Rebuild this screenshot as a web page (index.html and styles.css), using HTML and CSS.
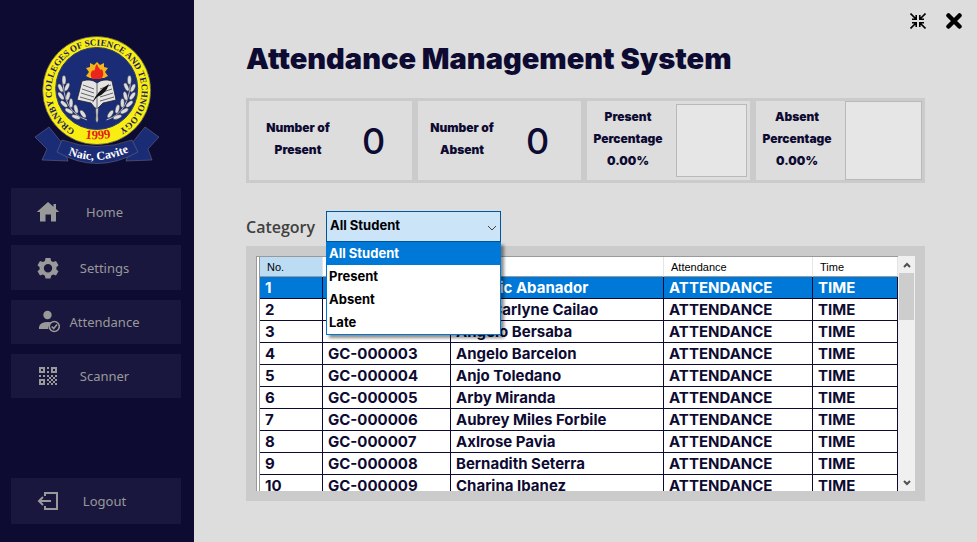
FILE: index.html
```html
<!DOCTYPE html>
<html lang="en">
<head>
<meta charset="utf-8">
<title>Attendance Management System</title>
<link rel="stylesheet" href="styles.css">
</head>
<body>
<div class="app">
  <aside class="sidebar">
    <svg class="logo" viewBox="0 0 145 140" role="img" aria-label="Granby Colleges of Science and Technology">
      <defs>
        <path id="ring" d="M50 100 A45 45 0 1 1 90 101.500"/>
        <path id="year" d="M50 106 Q72 113 96 105"/>
        <path id="ribbon" d="M37 122 Q72 139 110 119"/>
        <g id="wreath" fill="#ddd" stroke="#222" stroke-width=".4">
          <path d="M62 90 Q37 82 38 46" fill="none" stroke="#bbb" stroke-width="1"/>
          <ellipse cx="39" cy="50" rx="2" ry="4.5"/>
          <ellipse cx="35.500" cy="58" rx="2" ry="4.500" transform="rotate(-25 35.500 58)"/>
          <ellipse cx="42" cy="57" rx="2" ry="4.500" transform="rotate(25 42 57)"/>
          <ellipse cx="36" cy="66" rx="2" ry="4.500" transform="rotate(-35 36 66)"/>
          <ellipse cx="43" cy="66" rx="2" ry="4.500" transform="rotate(15 43 66)"/>
          <ellipse cx="39" cy="74" rx="2" ry="4.500" transform="rotate(-48 39 74)"/>
          <ellipse cx="46" cy="73" rx="2" ry="4.500" transform="rotate(0 46 73)"/>
          <ellipse cx="44" cy="81" rx="2" ry="4.500" transform="rotate(-60 44 81)"/>
          <ellipse cx="51" cy="79" rx="2" ry="4.500" transform="rotate(-15 51 79)"/>
          <ellipse cx="51" cy="87" rx="2" ry="4.500" transform="rotate(-72 51 87)"/>
          <ellipse cx="58" cy="84" rx="2" ry="4.500" transform="rotate(-35 58 84)"/>
        </g>
      </defs>
      <path d="M10 107 L24 97 L37 113 L43 131 L17 130 L22 119 Z M134 107 L120 97 L107 113 L101 131 L127 130 L123 119 Z" fill="#1b2c77" stroke="#667" stroke-width=".6"/>
      <circle cx="71.700" cy="60.500" r="54" fill="#f8ee12" stroke="#555" stroke-width=".7"/>
      <circle cx="71.700" cy="58.500" r="41" fill="#1b2c77" stroke="#34406b"/>
      <text class="logo-ring"><textPath href="#ring">GRANBY COLLEGES OF SCIENCE AND TECHNOLOGY</textPath></text>
      <path d="M37 110 Q72 123 107 110 L113 122 Q72 145 32 122 Z" fill="#1b2c77" stroke="#667" stroke-width=".6"/>
      <text class="logo-year"><textPath href="#year" startOffset="50%">1999</textPath></text>
      <text class="logo-place"><textPath href="#ribbon" startOffset="50%">Naic, Cavite</textPath></text>
      <use href="#wreath"/>
      <use href="#wreath" transform="translate(143.400 0) scale(-1 1)"/>
      <path d="M72 32 L75 35 L79 33 L79 37 L83 38 L80 42 L83 46 L79 48 L65 48 L61 46 L64 42 L61 38 L65 37 L65 33 L69 35 Z" fill="#f7b51c"/>
      <path d="M67 49 Q64 43 68 40 Q69 42 70 39 Q70 36 72 34 Q73 38 75 39 Q76 41 77 39 Q80 45 76 49 Z" fill="#e9251c"/>
      <path d="M70 70 H74 L73 86 Q74 91 72 93 Q70 91 71 86 Z" fill="#ccc" stroke="#222" stroke-width=".5"/>
      <path d="M57 51 Q66 48 72 53 Q78 48 87 51 L91 70 L78 73 L73 78 L70 78 L66 73 L52 70 Z" fill="#e4e4e4" stroke="#222" stroke-width=".8"/>
      <path d="M58 55 L69 59 M57 59 L69 63 M56 63 L69 67 M55 67 L69 71 M86 55 L75 59 M87 59 L75 63 M88 63 L75 67 M89 67 L75 71 M72 53 V77" fill="none" stroke="#444" stroke-width=".8"/>
      <path d="M67 73 Q72 61 84 54 Q81 64 72 67 Z" fill="#111"/>
    </svg>
    <nav class="menu">
      <button class="menu-item" type="button">
        <svg class="icon" viewBox="0 0 24 24"><path d="M12 2 0.800 12H4V21.500H9.500V14.500H15V21.500H20V12H23.200L20 9V4H17.500V6.800Z"/></svg>
        <span class="menu-label">Home</span>
      </button>
      <button class="menu-item" type="button">
        <svg class="icon" viewBox="0 0 24 24"><path fill-rule="evenodd" d="M9.500 2H14.500L15.100 5 17.200 6.100 20 5.100 22.500 9.300 20.400 11.300V13.500L22.500 15.300 20 19.500 17.200 18.500 15.100 19.700 14.500 22.500H9.500L8.900 19.700 6.800 18.500 4 19.500 1.500 15.300 3.600 13.500V11.300L1.500 9.300 4 5.100 6.800 6.100 8.900 5ZM12 8A4.200 4.200 0 1 0 12 16.400 4.200 4.200 0 0 0 12 8Z"/></svg>
        <span class="menu-label">Settings</span>
      </button>
      <button class="menu-item" type="button">
        <svg class="icon" viewBox="0 0 24 24"><circle cx="11.500" cy="5" r="4.200"/><path d="M3 19V17Q4 12 12 12Q15 12 16.500 12.500Q12 14 12.300 19Z"/><circle cx="18.300" cy="16.500" r="5" fill="none" stroke="#999" stroke-width="1.600"/><path d="M15.700 16.500 17.700 18.500 21 14.500" fill="none" stroke="#999" stroke-width="1.600"/></svg>
        <span class="menu-label">Attendance</span>
      </button>
      <button class="menu-item" type="button">
        <svg class="icon" viewBox="0 0 24 24"><path fill-rule="evenodd" d="M3 3H9V9H3ZM5 5V7H7V5ZM15 3H21V9H15ZM17 5V7H19V5ZM3 15H9V21H3ZM5 17V19H7V17Z"/><path d="M11 3h2v2h-2zM11 7h2v2h-2zM3 11h2v2H3zM7 11h2v2H7zM11 11h2v2h-2zM15 11h2v2h-2zM19 11h2v2h-2zM13 13h2v2h-2zM17 13h2v2h-2zM11 15h2v2h-2zM15 15h2v2h-2zM19 15h2v2h-2zM13 17h2v2h-2zM17 17h2v2h-2zM11 19h2v2h-2zM15 19h2v2h-2zM19 19h2v2h-2z"/></svg>
        <span class="menu-label">Scanner</span>
      </button>
    </nav>
    <button class="menu-item logout" type="button">
      <svg class="icon" viewBox="0 0 24 24"><path d="M9 7V4H21V20H9V17M15 12H4M7 8 3 12 7 16" fill="none" stroke="#999" stroke-width="2"/></svg>
      <span class="menu-label">Logout</span>
    </button>
  </aside>

  <main class="main">
    <div class="window-controls">
      <button class="window-button" type="button" aria-label="Restore">
        <svg viewBox="0 0 16 16"><path d="M.500.500 5.500 5.500M15.500.500 10.500 5.500M.500 15.500 5.500 10.500M15.500 15.500 10.500 10.500M6.200 2V6.200H2M9.800 2V6.200H14M6.200 14V9.800H2M9.800 14V9.800H14" fill="none" stroke="#000" stroke-width="1.600"/></svg>
      </button>
      <button class="window-button" type="button" aria-label="Close">
        <svg viewBox="0 0 16 16"><path d="M2.500 2.500 13.500 13.500M13.500 2.500 2.500 13.500" fill="none" stroke="#000" stroke-width="4.500" stroke-linecap="round"/></svg>
      </button>
    </div>
    <h1 class="title">Attendance Management System</h1>

    <section class="stats">
      <div class="stat">
        <p class="stat-label">Number of<br>Present</p>
        <p class="stat-value">0</p>
      </div>
      <div class="stat">
        <p class="stat-label">Number of<br>Absent</p>
        <p class="stat-value">0</p>
      </div>
      <div class="stat stat-percent">
        <p class="stat-label">Present<br>Percentage<br>0.00%</p>
        <div class="gauge gauge-inset"></div>
      </div>
      <div class="stat stat-percent">
        <p class="stat-label">Absent<br>Percentage<br>0.00%</p>
        <div class="gauge"></div>
      </div>
    </section>

    <div class="filter">
      <label class="filter-label" for="category">Category</label>
      <div class="combo">
        <select class="combo-box" id="category">
          <option>All Student</option>
          <option>Present</option>
          <option>Absent</option>
          <option>Late</option>
        </select>
        <svg class="combo-arrow" viewBox="0 0 10 6"><path d="M1 1 5 5 9 1" fill="none" stroke="#444"/></svg>
        <ul class="combo-list" role="listbox" aria-label="Category">
          <li class="combo-option selected" role="option" aria-selected="true">All Student</li>
          <li class="combo-option" role="option">Present</li>
          <li class="combo-option" role="option">Absent</li>
          <li class="combo-option" role="option">Late</li>
        </ul>
      </div>
    </div>

    <section class="panel">
      <div class="grid-view">
        <table class="records">
          <colgroup><col class="col-no"><col class="col-id"><col><col class="col-attendance"><col class="col-time"></colgroup>
          <thead>
            <tr><th class="sorted">No.</th><th></th><th></th><th>Attendance</th><th>Time</th></tr>
          </thead>
          <tbody>
            <tr class="current"><td>1</td><td></td><td>Roderic Abanador</td><td>ATTENDANCE</td><td>TIME</td></tr>
            <tr><td>2</td><td></td><td>Mae Carlyne Cailao</td><td>ATTENDANCE</td><td>TIME</td></tr>
            <tr><td>3</td><td></td><td>Angelo Bersaba</td><td>ATTENDANCE</td><td>TIME</td></tr>
            <tr><td>4</td><td>GC-000003</td><td>Angelo Barcelon</td><td>ATTENDANCE</td><td>TIME</td></tr>
            <tr><td>5</td><td>GC-000004</td><td>Anjo Toledano</td><td>ATTENDANCE</td><td>TIME</td></tr>
            <tr><td>6</td><td>GC-000005</td><td>Arby Miranda</td><td>ATTENDANCE</td><td>TIME</td></tr>
            <tr><td>7</td><td>GC-000006</td><td>Aubrey Miles Forbile</td><td>ATTENDANCE</td><td>TIME</td></tr>
            <tr><td>8</td><td>GC-000007</td><td>Axlrose Pavia</td><td>ATTENDANCE</td><td>TIME</td></tr>
            <tr><td>9</td><td>GC-000008</td><td>Bernadith Seterra</td><td>ATTENDANCE</td><td>TIME</td></tr>
            <tr><td>10</td><td>GC-000009</td><td>Charina Ibanez</td><td>ATTENDANCE</td><td>TIME</td></tr>
          </tbody>
        </table>
      </div>
      <div class="scrollbar">
        <button class="scroll-button" type="button" aria-label="Scroll up"><svg viewBox="0 0 8 6"><path d="M1 5 4 2 7 5" fill="none" stroke="#505050" stroke-width="2"/></svg></button>
        <div class="scroll-thumb"></div>
        <button class="scroll-button scroll-down" type="button" aria-label="Scroll down"><svg viewBox="0 0 8 6"><path d="M1 1 4 4 7 1" fill="none" stroke="#505050" stroke-width="2"/></svg></button>
      </div>
    </section>
  </main>
</div>
</body>
</html>
```
FILE: styles.css
```css
* {
  box-sizing: border-box;
}

body {
  margin: 0;
  background: #ddd;
  color: #0e0b32;
  font-family: Inter, sans-serif;
}

p,
h1,
ul {
  margin: 0;
  padding: 0;
}

button {
  border: 0;
  padding: 0;
  background: none;
  font: inherit;
}

.app {
  display: flex;
  min-height: 100vh;
}

/* Sidebar */
.sidebar {
  display: flex;
  flex: 0 0 194px;
  flex-direction: column;
  padding: 30px 13px 18px 11px;
  background: #0e0b32;
}

.logo {
  width: 145px;
  height: 140px;
  margin: 0 0 18px 14px;
}

.logo text {
  font-family: "Liberation Serif", serif;
  font-weight: bold;
}

.logo .logo-ring {
  fill: #1b2060;
  font-size: 9px;
}

.logo .logo-year {
  fill: #e4201c;
  font-size: 13px;
  text-anchor: middle;
}

.logo .logo-place {
  fill: #fff;
  font-size: 12px;
  text-anchor: middle;
}

.menu {
  display: grid;
  grid-template-rows: 47px 45px 44px 44px;
  gap: 10px;
}

.menu-item {
  display: flex;
  align-items: center;
  padding: 0 32px 0 25px;
  background: #1a173f;
  color: #999;
  font: 13px "Noto Sans", sans-serif;
}

.icon {
  flex: none;
  width: 24px;
  height: 24px;
  fill: #999;
}

.menu-label {
  flex: 1;
  text-align: center;
}

.logout {
  height: 46px;
  margin-top: auto;
}

/* Main area */
.main {
  flex: 1;
  min-width: 0;
  padding: 13px 52px 41px;
}

.window-controls {
  display: flex;
  justify-content: flex-end;
  gap: 20px;
  margin-right: -37px;
}

.window-button {
  width: 16px;
  height: 16px;
}

.window-button svg {
  display: block;
}

.title {
  margin: 10px 0 20px;
  font-size: 29px;
  font-weight: 900;
  line-height: 39px;
  white-space: nowrap;
}

/* Statistics */
.stats {
  display: grid;
  grid-template-columns: 163fr 163fr 163fr 166fr;
  gap: 6px;
  padding: 3px;
  background: #cbcbcb;
}

.stat {
  display: flex;
  align-items: center;
  height: 79px;
  background: #ddd;
}

.stat-label {
  flex: 0 0 98px;
  padding-bottom: 3px;
  font-size: 12px;
  font-weight: 900;
  line-height: 22px;
  text-align: center;
}

.stat:nth-child(2) .stat-label {
  flex-basis: 88px;
}

.stat-value {
  flex: 1;
  padding-right: 12px;
  font-size: 36px;
  font-weight: 500;
  text-align: center;
}

.stat-percent .stat-label {
  flex-basis: 82px;
}

.gauge {
  flex: 0 0 77px;
  align-self: stretch;
  margin-left: auto;
  border: 1px solid #b9b9b9;
  background: #e6e6e6;
}

.gauge-inset {
  flex-basis: 71px;
  margin: 3px 3px 3px auto;
}

/* Category filter */
.filter {
  display: flex;
  gap: 10px;
  align-items: center;
  margin-top: 28px;
}

.filter-label {
  flex: 0 0 70px;
  color: #404040;
  font: 600 16px "Open Sans", sans-serif;
}

.combo {
  position: relative;
  flex: 0 0 175px;
}

.combo-box {
  display: block;
  width: 100%;
  height: 31px;
  padding: 0 3px 3px;
  appearance: none;
  border: 1px solid #005499;
  border-radius: 0;
  background: #cce4f7;
  color: #000;
  font: 700 13px Inter, sans-serif;
}

.combo-arrow {
  position: absolute;
  top: 14px;
  right: 4px;
  width: 10px;
  height: 6px;
}

.combo-list {
  position: absolute;
  z-index: 1;
  top: 100%;
  right: 0;
  left: 0;
  border: 1px solid #0078d7;
  border-top: 0;
  background: #fff;
  box-shadow: 3px 3px 3px rgb(0 0 0 / 45%);
  color: #000;
  font-size: 13px;
  font-weight: 700;
  line-height: 23px;
  list-style: none;
}

.combo-option {
  padding-left: 2px;
}

.combo-option.selected {
  background: #0078d7;
  color: #fff;
}

/* Records */
.panel {
  display: flex;
  height: 255px;
  margin-top: 4px;
  padding: 10px;
  background: #cbcbcb;
}

.grid-view {
  flex: 1;
  min-width: 0;
  overflow: hidden;
  padding-left: 2px;
  border: solid #999;
  border-width: 1px 0 0 1px;
  background: #fff;
}

.records {
  width: 100%;
  border-left: 1px solid #999;
  border-collapse: separate;
  border-spacing: 0;
  table-layout: fixed;
}

.col-no {
  width: 63px;
}

.col-id {
  width: 128px;
}

.col-attendance {
  width: 149px;
}

.col-time {
  width: 85px;
}

.records th {
  height: 20px;
  padding: 0 7px;
  border-right: 1px solid #e5e5e5;
  border-bottom: 1px solid #999;
  color: #000;
  font: 11px "Liberation Sans", sans-serif;
  text-align: left;
}

.records .sorted {
  background: #bcdcf4;
}

.records td {
  height: 22px;
  padding: 0 5px;
  border-right: 1px solid #0e0b32;
  border-bottom: 1px solid #0e0b32;
  font-size: 15px;
  font-weight: 700;
  line-height: 20px;
  white-space: nowrap;
}

.records .current td {
  background: #0078d7;
  color: #fff;
}

.scrollbar {
  display: flex;
  flex: 0 0 17px;
  flex-direction: column;
  background: #f0f0f0;
}

.scroll-button {
  display: flex;
  align-items: center;
  justify-content: center;
  height: 17px;
}

.scroll-button svg {
  width: 8px;
  height: 6px;
}

.scroll-thumb {
  height: 47px;
  margin: 0 1px;
  background: #cdcdcd;
}

.scroll-down {
  margin-top: auto;
}
```
